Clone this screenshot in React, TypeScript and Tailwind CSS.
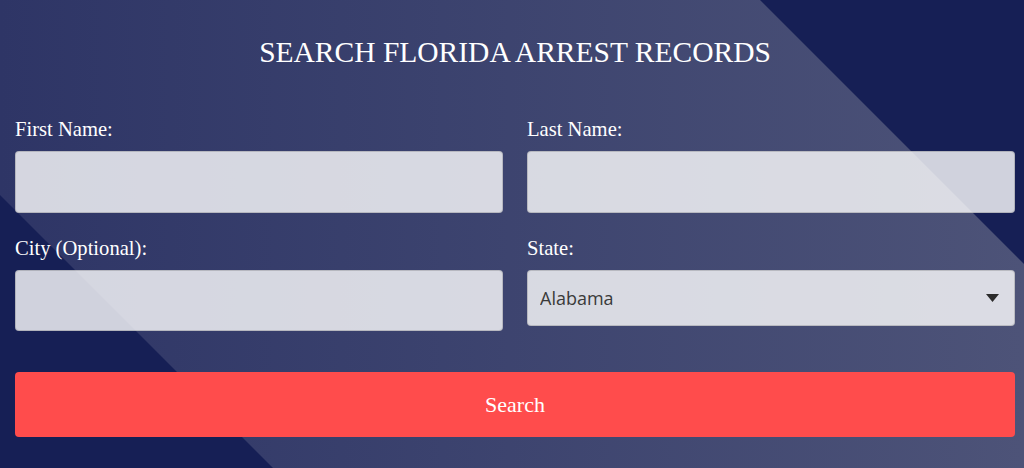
import React from "react";

const serif = { fontFamily: '"Liberation Serif", "Times New Roman", serif' };

function Field({ label, children }: { label: string; children: React.ReactNode }) {
  return (
    <div className="flex flex-col">
      <label className="h-[24px] leading-[24px] text-[20.6px] text-white mb-[10px]" style={serif}>
        {label}
      </label>
      {children}
    </div>
  );
}

export default function App() {
  return (
    <div className="relative h-[468px] w-[1024px] overflow-hidden bg-[#161f55]">
      <div
        className="absolute inset-0 bg-gradient-to-r from-[#2e3566] to-[#4d5378] [clip-path:polygon(0px_0px,760px_0px,1024px_264px,1024px_468px,273px_468px,0px_195px)]"
      />
      <div className="relative pl-[15px] pr-[9px]">
        <h1
          className="pt-[34px] h-[70px] leading-[36px] text-center text-[29.5px] text-white font-normal"
          style={serif}
        >
          SEARCH FLORIDA ARREST RECORDS
        </h1>
        <div className="grid grid-cols-2 gap-x-[24px] gap-y-[23px] mt-[47px]">
          <Field label="First Name:">
            <input className="h-[62px] rounded-[4px] bg-white/80 border border-black/15 outline-none" />
          </Field>
          <Field label="Last Name:">
            <input className="h-[62px] rounded-[4px] bg-white/80 border border-black/15 outline-none" />
          </Field>
          <Field label="City (Optional):">
            <input className="h-[61px] rounded-[4px] bg-white/80 border border-black/15 outline-none" />
          </Field>
          <Field label="State:">
            <div className="relative h-[56px]">
              <select
                className="appearance-none h-full w-full rounded-[4px] bg-white/80 border border-black/15 pl-[12px] text-[18px] text-[#3a3a3a] outline-none"
                style={{ fontFamily: '"Open Sans", "Noto Sans", sans-serif' }}
                defaultValue="Alabama"
              >
                <option>Alabama</option>
              </select>
              <svg
                className="absolute right-[16px] top-[24px] pointer-events-none"
                width="13"
                height="8"
                viewBox="0 0 13 8"
              >
                <polygon points="0,0 13,0 6.5,8" fill="#2b2b2b" />
              </svg>
            </div>
          </Field>
        </div>
        <button
          className="mt-[41px] h-[65px] w-full rounded-[4px] bg-[#ff4c4c] text-white text-[22px]"
          style={serif}
        >
          Search
        </button>
      </div>
    </div>
  );
}
